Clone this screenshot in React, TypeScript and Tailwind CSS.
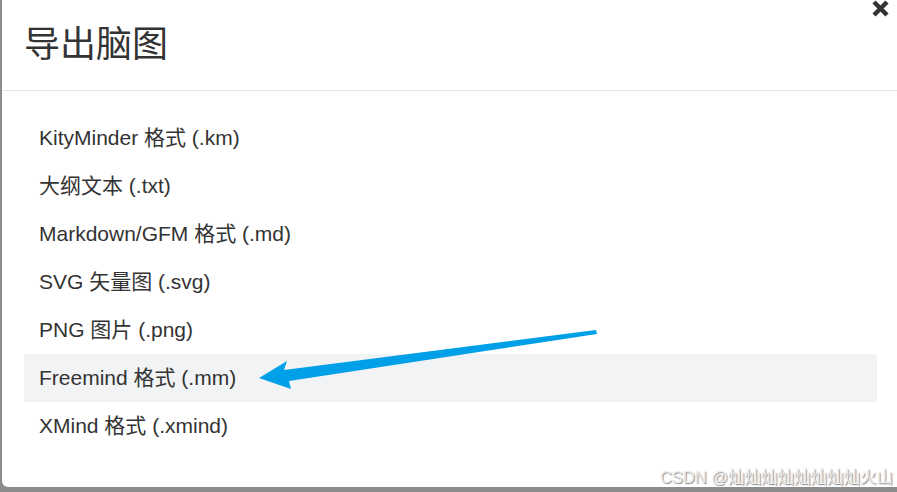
import React from "react";

const formats = [
  "KityMinder 格式 (.km)",
  "大纲文本 (.txt)",
  "Markdown/GFM 格式 (.md)",
  "SVG 矢量图 (.svg)",
  "PNG 图片 (.png)",
  "Freemind 格式 (.mm)",
  "XMind 格式 (.xmind)",
];

const ExportDialog = () => {
  return (
    <div className="relative h-[492px] w-[897px] overflow-hidden bg-[#8c8c8c] font-['Liberation_Sans','Noto_Sans_CJK_SC',sans-serif] text-[#333]">
      <div className="ml-[2px] h-[487px] w-[905px] rounded-bl-[6px] bg-white">
        <div className="h-[91px] border-b border-[#e5e5e5] pl-[22px] pt-[17px]">
          <h2 className="font-['Noto_Sans_CJK_SC',sans-serif] text-[36px] leading-[48px] text-[#333]">
            导出脑图
          </h2>
        </div>
        <ul className="px-[22px] pt-[23px]">
          {formats.map((f) => (
            <li
              key={f}
              className={`flex h-[48px] w-[853px] items-center pl-[15px] text-[21px] ${
                f.startsWith("Freemind") ? "bg-[#f2f3f5]" : ""
              }`}
            >
              {f}
            </li>
          ))}
        </ul>
      </div>

      {/* close */}
      <svg className="absolute left-[871px] top-0" width="19" height="19" viewBox="0 0 19 19">
        <path d="M3 2 L16 15 M16 2 L3 15" stroke="#333" strokeWidth="4.5" />
      </svg>

      {/* annotation arrow */}
      <svg className="absolute left-0 top-0" width="897" height="492" viewBox="0 0 897 492">
        <polygon
          points="259,378 287,361 284,370 596,330 597,334 289,381 291,389"
          fill="#00a0e9"
        />
      </svg>

      <div className="absolute right-[4px] top-[465px] font-['Liberation_Sans','Noto_Sans_CJK_SC',sans-serif] text-[16.5px] text-[#ececec] [text-shadow:1px_1px_1px_#888]">
        CSDN @灿灿灿灿灿灿灿灿火山
      </div>
    </div>
  );
};

export default function App() {
  return <ExportDialog />;
}
